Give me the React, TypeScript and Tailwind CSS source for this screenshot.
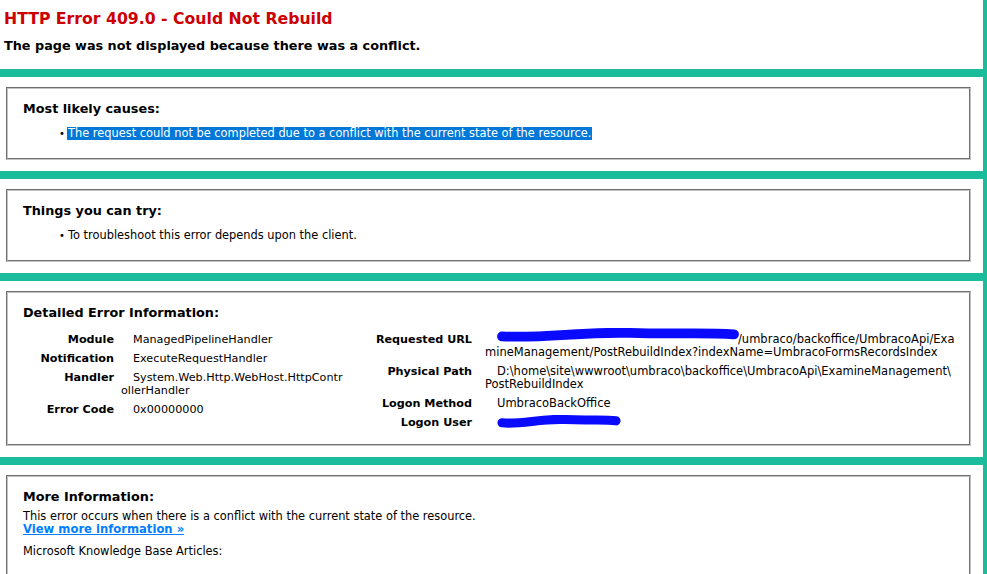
import React from "react";

function Scribble({ w, h }: { w: number; h: number }) {
  return (
    <svg width={w} height={h} viewBox={`0 0 ${w} ${h}`} className="absolute left-0 top-0">
      <path
        d={`M5 ${h * 0.6} C ${w * 0.2} ${h * 0.75}, ${w * 0.35} ${h * 0.25}, ${w * 0.55} ${h * 0.35} S ${w * 0.85} ${h * 0.3}, ${w - 5} ${h * 0.45}`}
        stroke="#0a0aff"
        strokeWidth={h * 0.7}
        strokeLinecap="round"
        fill="none"
      />
    </svg>
  );
}

function Section({ children, boxClass }: { children: React.ReactNode; boxClass: string }) {
  return (
    <div className="bg-white mr-[4px] mt-[8px] pt-[10px] pb-[11px] pl-[6px] pr-[12px]">
      <div className={`border-2 [border-style:groove] border-[#c4c4c4] pl-[15px] pr-[15px] ${boxClass}`}>{children}</div>
    </div>
  );
}

const Legend = ({ children }: { children: React.ReactNode }) => (
  <div className="font-bold text-[12.8px] leading-[16px] text-black">{children}</div>
);

const Row = ({ label, children, lw }: { label: string; children: React.ReactNode; lw: string }) => (
  <div className="flex py-[3px] leading-[13px]">
    <div className={`${lw} shrink-0 text-right font-bold text-[11.2px]`}>{label}</div>
    <div className="flex-1 min-w-0">{children}</div>
  </div>
);

export default function App() {
  return (
    <div className="w-[987px] h-[574px] overflow-hidden bg-[#1bbc9b] font-['DejaVu_Sans',Verdana,sans-serif] text-[11.4px] text-black">
      <div className="bg-white mr-[4px] h-[69px] pl-[4px] pt-[9px]">
        <div className="text-[15.7px] leading-[20px] font-bold text-[#cc0000]">HTTP Error 409.0 - Could Not Rebuild</div>
        <div className="mt-[9px] text-[12.8px] leading-[16px] font-bold">The page was not displayed because there was a conflict.</div>
      </div>

      <Section boxClass="h-[73px] pt-[12px]">
        <Legend>Most likely causes:</Legend>
        <div className="mt-[10px] flex items-center pl-[36px] leading-[13px]">
          <span className="w-[8px] text-[10px]">•</span>
          <span className="bg-[#0078d7] text-white px-[1px]">The request could not be completed due to a conflict with the current state of the resource.</span>
        </div>
      </Section>

      <Section boxClass="h-[73px] pt-[12px]">
        <Legend>Things you can try:</Legend>
        <div className="mt-[10px] flex items-center pl-[36px] leading-[13px]">
          <span className="w-[8px] text-[10px]">•</span>
          <span className="px-[1px]">To troubleshoot this error depends upon the client.</span>
        </div>
      </Section>

      <Section boxClass="h-[155px] pt-[12px]">
        <Legend>Detailed Error Information:</Legend>
        <div className="mt-[9px] flex">
          <div className="w-[325px] shrink-0 mr-[19px] text-[11.2px]">
            <Row label="Module" lw="w-[91px]">
              <span className="pl-[19px]">ManagedPipelineHandler</span>
            </Row>
            <Row label="Notification" lw="w-[91px]">
              <span className="pl-[19px]">ExecuteRequestHandler</span>
            </Row>
            <Row label="Handler" lw="w-[91px]">
              <div className="pl-[7px]">
                <div className="pl-[12px]">System.Web.Http.WebHost.HttpContr</div>
                <div>ollerHandler</div>
              </div>
            </Row>
            <Row label="Error Code" lw="w-[91px]">
              <span className="pl-[19px]">0x00000000</span>
            </Row>
          </div>
          <div className="flex-1 text-[11.5px]">
            <Row label="Requested URL" lw="w-[105px]">
              <div className="pl-[13px]">
                <div className="relative pl-[253px] whitespace-nowrap">
                  <div className="absolute left-[12px] top-[-5px] w-[242px] h-[14px]">
                    <Scribble w={242} h={14} />
                  </div>
                  /umbraco/backoffice/UmbracoApi/Exa
                </div>
                <div className="whitespace-nowrap">mineManagement/PostRebuildIndex?indexName=UmbracoFormsRecordsIndex</div>
              </div>
            </Row>
            <Row label="Physical Path" lw="w-[105px]">
              <div className="pl-[13px]">
                <div className="pl-[12px] whitespace-nowrap">D:\home\site\wwwroot\umbraco\backoffice\UmbracoApi\ExamineManagement\</div>
                <div>PostRebuildIndex</div>
              </div>
            </Row>
            <Row label="Logon Method" lw="w-[105px]">
              <span className="pl-[25px]">UmbracoBackOffice</span>
            </Row>
            <Row label="Logon User" lw="w-[105px]">
              <div className="relative h-[13px] ml-[25px]">
                <div className="absolute left-0 top-[-1px] w-[124px] h-[13px]">
                  <Scribble w={124} h={13} />
                </div>
              </div>
            </Row>
          </div>
        </div>
      </Section>

      <Section boxClass="h-[200px] pt-[12px]">
        <Legend>More Information:</Legend>
        <div className="mt-[5px] leading-[13px]">This error occurs when there is a conflict with the current state of the resource.</div>
        <div className="leading-[13px]">
          <a className="text-[#007eff] font-bold underline text-[11.6px]">View more information »</a>
        </div>
        <div className="mt-[9px] leading-[13px]">Microsoft Knowledge Base Articles:</div>
      </Section>
    </div>
  );
}
